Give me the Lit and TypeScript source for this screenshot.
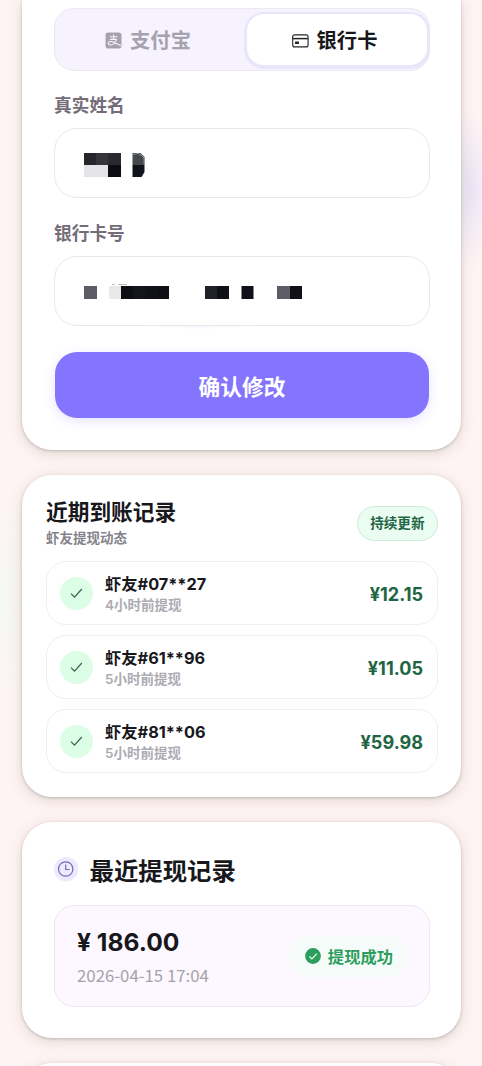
import { LitElement, html, css, svg } from "lit";
import { customElement } from "lit/decorators.js";

interface Payout {
  name: string;
  time: string;
  amount: string;
}

const PAYOUTS: Payout[] = [
  { name: "虾友#07**27", time: "4小时前提现", amount: "¥12.15" },
  { name: "虾友#61**96", time: "5小时前提现", amount: "¥11.05" },
  { name: "虾友#81**06", time: "5小时前提现", amount: "¥59.98" },
];

// Mosaic tiles hiding private values: x, y, width, height, fill
type Tile = [number, number, number, number, string];

const NAME_TILES: Tile[] = [
  [0, 0, 12, 12, "#25252c"],
  [12, 0, 12, 12, "#34343a"],
  [24, 0, 13, 12, "#29292f"],
  [0, 12, 24, 12, "#e6e3e8"],
  [24, 12, 13, 12, "#0c0d13"],
];

const CARD_TILES: Tile[] = [
  [0, 0, 13, 13, "#5e5c65"],
  [25, 0, 12, 13, "#e9e8eb"],
  [37, 0, 12, 13, "#0d0e14"],
  [49, 0, 12, 13, "#12151b"],
  [61, 0, 12, 13, "#101219"],
  [73, 0, 12, 13, "#0e0f15"],
  [121, 0, 12, 13, "#202129"],
  [133, 0, 12, 13, "#101118"],
  [157.5, 0, 12, 13, "#101118"],
  [193, 0, 12.5, 13, "#5e5a66"],
  [205.5, 0, 12.5, 13, "#101116"],
];

const tiles = (list: Tile[]) =>
  list.map(([x, y, w, h, f]) => svg`<rect x=${x} y=${y} width=${w} height=${h} fill=${f}></rect>`);

@customElement("app-root")
export class AppRoot extends LitElement {
  static styles = css`
    :host {
      display: block;
      box-sizing: border-box;
      height: 1066px;
      overflow: hidden;
      padding: 0 21px 0 22px;
      background:
        radial-gradient(ellipse 24px 80px at 470px 190px, rgba(226, 220, 246, 0.7), transparent),
        radial-gradient(ellipse 34px 110px at 0 600px, rgba(242, 248, 243, 0.9), transparent),
        #fff4f5;
      font-family: Inter, "Noto Sans CJK SC", sans-serif;
      font-feature-settings: "calt" 0;
      color: #17171c;
    }
    * { box-sizing: border-box; }
    svg { display: block; flex: none; }
    .card {
      background: #fff;
      border-radius: 30px;
      box-shadow: 0 1px 3px rgba(70, 66, 85, 0.26), 0 3px 14px rgba(110, 110, 60, 0.22);
    }
    .bind {
      height: 450px;
      padding: 8px 31px 32px 32px;
      border-radius: 0 0 30px 30px;
      background: radial-gradient(ellipse 78px 9px at 178px 320px, #e9defa, transparent) #fff;
    }
    .segment {
      display: flex;
      height: 63px;
      padding: 5px 2px 5px 0;
      border: 1px solid #ebe8f4;
      border-radius: 20px;
      background: #f6f3fe;
    }
    .tab {
      display: flex;
      align-items: center;
      justify-content: center;
      flex: 1;
      gap: 8px;
      padding: 2px 6px 0 0;
      font-size: 20.3px;
      font-weight: 700;
      line-height: 30px;
      color: #a5a2ae;
    }
    .tab.active {
      flex: none;
      width: 180px;
      padding-right: 5px;
      border-radius: 17px;
      background: #fff;
      color: #17171c;
      box-shadow: 0 1px 0 3px #eae5fb;
    }
    .label {
      margin-top: 21px;
      height: 28px;
      line-height: 28px;
      font-size: 17.7px;
      font-weight: 700;
      color: #746d78;
    }
    .field + .label { margin-top: 22px; }
    .field {
      display: flex;
      align-items: center;
      height: 70px;
      margin-top: 8px;
      padding-left: 29px;
      border: 1px solid #e8e7ea;
      border-radius: 23px;
      background: #fff;
    }
    .name-mask { margin-top: 5px; }
    .submit {
      display: flex;
      align-items: center;
      justify-content: center;
      height: 66px;
      margin: 26px 1px 0;
      border-radius: 22px;
      background: #8474fe;
      color: #fff;
      font-size: 21.7px;
      font-weight: 700;
      box-shadow: 0 3px 12px rgba(132, 116, 254, 0.2);
    }
    .feed {
      height: 322px;
      margin-top: 25px;
      padding: 22px 23px 0 24px;
    }
    .feed-head {
      display: flex;
      align-items: center;
      justify-content: space-between;
      height: 52px;
    }
    .feed-title {
      font-size: 21.7px;
      font-weight: 700;
      line-height: 30px;
    }
    .feed-sub {
      font-size: 13.5px;
      font-weight: 600;
      line-height: 22px;
      color: #85828b;
    }
    .live {
      height: 35px;
      padding: 0 12.5px;
      border: 1.5px solid #cdecdb;
      border-radius: 18px;
      background: #ebfcf3;
      color: #226543;
      font-size: 13.6px;
      font-weight: 700;
      line-height: 32px;
    }
    .rows {
      display: grid;
      gap: 10px;
      margin-top: 12px;
    }
    .row {
      display: flex;
      align-items: center;
      height: 64px;
      padding: 0 14px 0 13px;
      border: 1px solid #edf1ef;
      border-radius: 20px;
      background: #fefffe;
    }
    .tick {
      display: grid;
      place-items: center;
      width: 33px;
      height: 33px;
      border-radius: 50%;
      background: #dcfde6;
    }
    .who {
      flex: 1;
      padding: 2px 0 0 12px;
    }
    .who-name {
      font-size: 16.3px;
      font-weight: 700;
      line-height: 22px;
    }
    .who-time {
      font-size: 13.5px;
      font-weight: 600;
      line-height: 20px;
      color: #adabb3;
    }
    .sum {
      padding-top: 2px;
      font-size: 18.1px;
      font-weight: 700;
      color: #226543;
    }
    .latest {
      height: 216px;
      margin-top: 25px;
      padding: 31px 31px 0 32px;
    }
    .latest-head {
      display: flex;
      align-items: center;
      gap: 10.5px;
      height: 36px;
      font-size: 24.4px;
      font-weight: 700;
      line-height: 36px;
    }
    .latest-head svg { margin-top: -3px; }
    .record {
      display: flex;
      align-items: center;
      justify-content: space-between;
      height: 102px;
      margin-top: 16px;
      padding: 0 21px 0 22px;
      border: 1px solid #ece8f2;
      border-radius: 20px;
      background: #fdf8ff;
    }
    .record-sum {
      padding-top: 3px;
      font-size: 24.6px;
      font-weight: 700;
      line-height: 36px;
    }
    .record-date {
      font-family: "Noto Sans CJK SC", sans-serif;
      font-size: 16.8px;
      line-height: 31px;
      color: #a4a2aa;
    }
    .done {
      display: flex;
      align-items: center;
      gap: 7px;
      height: 41px;
      padding: 0 15px 0 16px;
      border-radius: 20px;
      background: #f5fbf8;
      color: #2b9e5d;
      font-size: 16.3px;
      font-weight: 700;
    }
    .next {
      height: 60px;
      margin-top: 25px;
    }
  `;

  render() {
    return html`
      <section class="card bind">
        <div class="segment">
          <div class="tab">
            <svg width="17" height="17" viewBox="0 0 17 17">
              <rect x="0.5" y="0.5" width="16" height="16" rx="2.8" fill="#a5a2ae"></rect>
              <path d="M4.8 4.8h7.6M8.6 2.4v5M5 7.4h6.4C10.2 11 8.3 13 5.8 13c-3.6 0-3.2-3.7 0-3.5 3.2.2 6 2.6 10.4 4" fill="none" stroke="#f6f3fe" stroke-width="1.1"></path>
            </svg>
            <span>支付宝</span>
          </div>
          <div class="tab active">
            <svg width="17" height="14" viewBox="0 0 17 14">
              <rect x="0.7" y="0.9" width="15.4" height="12" rx="2" fill="none" stroke="#24242a" stroke-width="1.1"></rect>
              <path d="M0.7 4.6h15.4" stroke="#24242a" stroke-width="1.5"></path>
              <rect x="3" y="7.5" width="4" height="2.6" rx="0.5" fill="#24242a"></rect>
            </svg>
            <span>银行卡</span>
          </div>
        </div>
        <div class="label">真实姓名</div>
        <div class="field">
          <svg class="name-mask" width="62" height="25" viewBox="0 0 62 25">
            ${tiles(NAME_TILES)}
            <path d="M48.5 0h8l4 4v8h-12z" fill="#45484c"></path>
            <path d="M48.5 12h12v7l-3 5h-9z" fill="#10141a"></path>
            <path d="M49 1.5l5-1 4 2M57 2l3 3v6" fill="none" stroke="#8e9190" stroke-width="1"></path>
          </svg>
        </div>
        <div class="label">银行卡号</div>
        <div class="field">
          <svg class="number-mask" width="220" height="16" viewBox="0 -3 220 16">
            <path d="M28 -1.5h3M34 -1.5h9" stroke="#bdbdbf" stroke-width="1.2"></path>
            ${tiles(CARD_TILES)}
          </svg>
        </div>
        <div class="submit">确认修改</div>
      </section>

      <section class="card feed">
        <div class="feed-head">
          <div>
            <div class="feed-title">近期到账记录</div>
            <div class="feed-sub">虾友提现动态</div>
          </div>
          <div class="live">持续更新</div>
        </div>
        <div class="rows">
          ${PAYOUTS.map(
            (p) => html`
              <div class="row">
                <div class="tick">
                  <svg width="13" height="11" viewBox="0 0 13 11">
                    <path d="M1 5.6l3.5 3.6L11.8 1" fill="none" stroke="#38634d" stroke-width="1.2"></path>
                  </svg>
                </div>
                <div class="who">
                  <div class="who-name">${p.name}</div>
                  <div class="who-time">${p.time}</div>
                </div>
                <div class="sum">${p.amount}</div>
              </div>
            `
          )}
        </div>
      </section>

      <section class="card latest">
        <div class="latest-head">
          <svg width="25" height="25" viewBox="0 0 25 25">
            <circle cx="12.2" cy="12.2" r="12.2" fill="#eeeafd"></circle>
            <circle cx="11.7" cy="12" r="7.2" fill="none" stroke="#7568b4" stroke-width="1.2"></circle>
            <path d="M11.7 7.5v5h3.8" fill="none" stroke="#7568b4" stroke-width="1.2"></path>
          </svg>
          <span>最近提现记录</span>
        </div>
        <div class="record">
          <div>
            <div class="record-sum">¥ 186.00</div>
            <div class="record-date">2026-04-15 17:04</div>
          </div>
          <div class="done">
            <svg width="16" height="16" viewBox="0 0 16 16">
              <circle cx="8" cy="8" r="7.9" fill="#2b9e5d"></circle>
              <path d="M4.3 8.4l2.6 2.5 5-5.3" fill="none" stroke="#eafbf1" stroke-width="1.3"></path>
            </svg>
            <span>提现成功</span>
          </div>
        </div>
      </section>

      <section class="card next"></section>
    `;
  }
}
